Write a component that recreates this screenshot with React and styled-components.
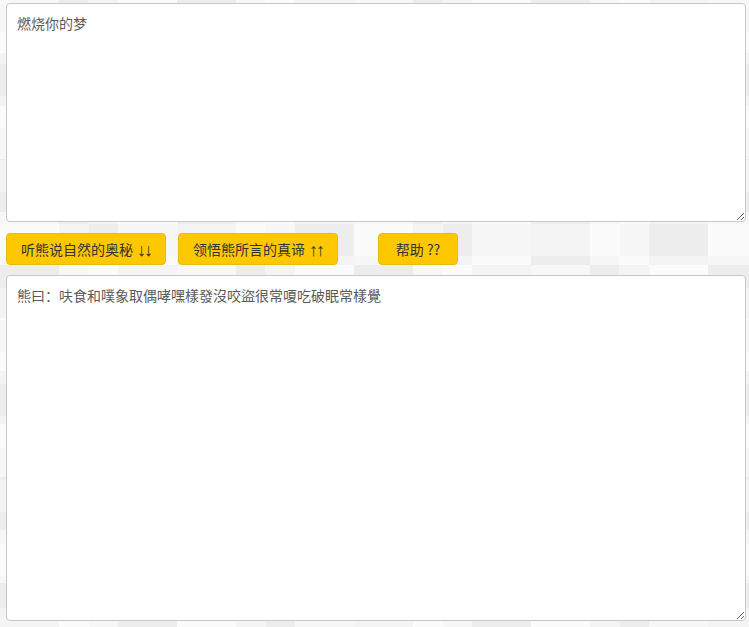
import React from "react";
import styled, { createGlobalStyle } from "styled-components";

const Global = createGlobalStyle`
  html, body { margin: 0; padding: 0; }
  body {
    font-family: "Noto Sans CJK SC", "Liberation Sans", sans-serif;
    background-color: #f5f5f5;
    background-image:
      repeating-conic-gradient(rgba(0,0,0,0.02) 0 25%, rgba(255,255,255,0.35) 0 50%),
      repeating-conic-gradient(rgba(255,255,255,0.4) 0 25%, rgba(0,0,0,0.012) 0 50%);
    background-size: 118px 106px, 177px 64px;
    min-height: 627px;
  }
`;

const Page = styled.div`
  padding: 3px 3px 6px 6px;
  display: flex;
  flex-direction: column;
  gap: 10px;
  box-sizing: border-box;
  width: 749px;
`;

const TextBox = styled.textarea`
  display: block;
  box-sizing: border-box;
  width: 740px;
  height: ${(p) => p.$h}px;
  margin: 0;
  padding: 9px 10px;
  border: 1px solid #c8c8c8;
  border-radius: 4px;
  background: #fff;
  color: #5a5a5a;
  font-family: "Noto Sans CJK SC", "Liberation Sans", sans-serif;
  font-size: 14px;
  line-height: 20px;
  resize: vertical;
  outline: none;
`;

const Toolbar = styled.div`
  display: flex;
  align-items: center;
  gap: 12px;
  margin-top: 1px;
`;

const Button = styled.button`
  box-sizing: border-box;
  width: ${(p) => p.$w}px;
  height: 32px;
  margin-left: ${(p) => p.$ml || 0}px;
  padding: 0;
  border: 1px solid #e8bd10;
  border-radius: 4px;
  background: #fdc800;
  color: #333;
  font-family: "Noto Sans CJK SC", "Liberation Sans", sans-serif;
  font-size: 14px;
  line-height: 30px;
  cursor: pointer;
`;

const Arrows = styled.span`
  font-family: "Liberation Sans", sans-serif;
  font-size: 18px;
  line-height: 14px;
  letter-spacing: -2px;
  margin-left: 4px;
  vertical-align: -1px;
`;

export default function App() {
  return (
    <>
      <Global />
      <Page>
        <TextBox $h={219} defaultValue="燃烧你的梦" />
        <Toolbar>
          <Button $w={160}>听熊说自然的奥秘<Arrows>↓↓</Arrows></Button>
          <Button $w={160}>领悟熊所言的真谛<Arrows>↑↑</Arrows></Button>
          <Button $w={80} $ml={28}>帮助 ??</Button>
        </Toolbar>
        <TextBox
          $h={346}
          defaultValue="熊曰：呋食和噗象取偶哮嘿樣發沒咬盜很常嗄吃破眠常樣覺"
        />
      </Page>
    </>
  );
}
